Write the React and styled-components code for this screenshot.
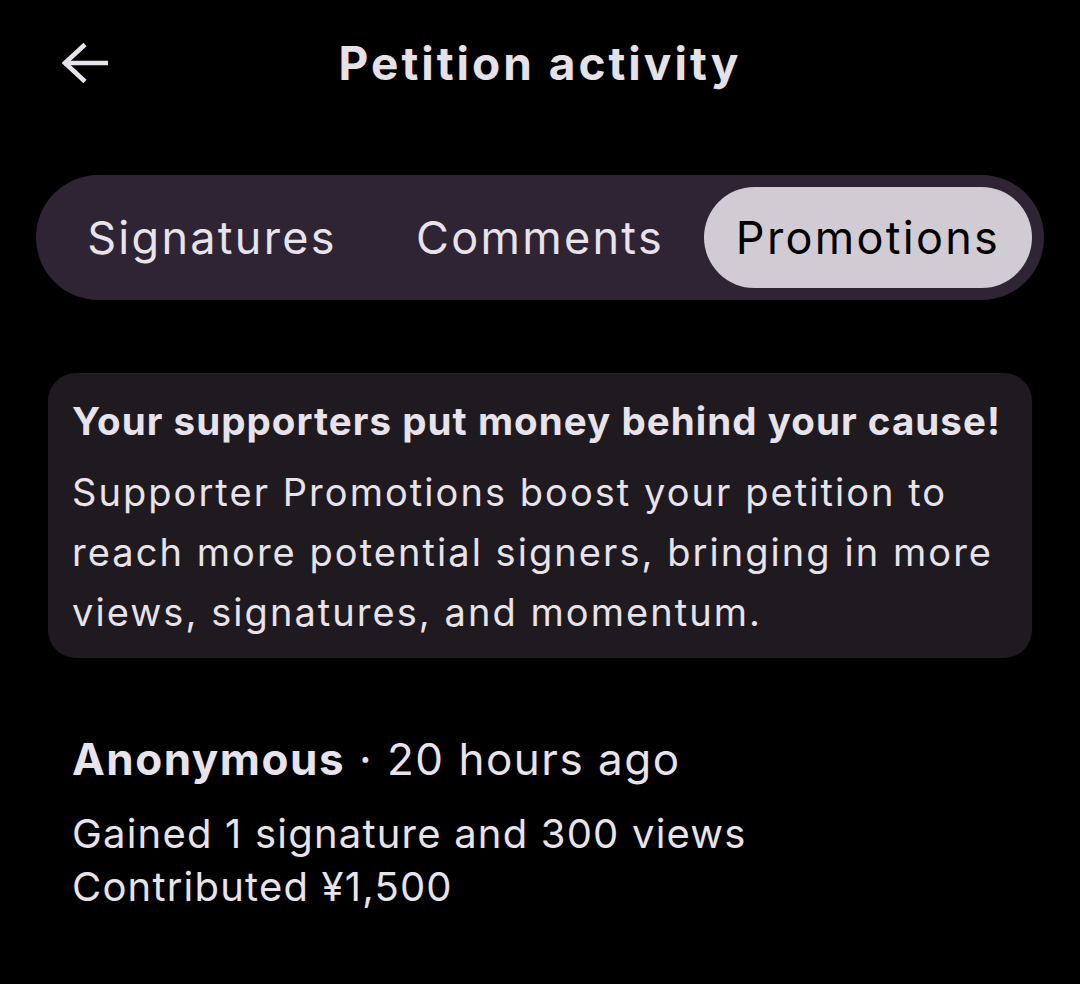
import React, { useState } from 'react';
import styled, { createGlobalStyle } from 'styled-components';

const GlobalStyle = createGlobalStyle`
  html, body {
    margin: 0;
    padding: 0;
    background: #000;
  }
  body {
    font-family: Inter, "Open Sans", "Liberation Sans", sans-serif;
    color: #e8e3ea;
    -webkit-font-smoothing: antialiased;
  }
`;

const Screen = styled.div`
  width: 1080px;
  min-height: 984px;
  background: #000;
  box-sizing: border-box;
  padding: 0 48px;
`;

const Header = styled.header`
  height: 126px;
  display: grid;
  grid-template-columns: 60px 1fr 60px;
  align-items: center;
  margin: 0 -48px;
  padding: 0 48px;
`;

const BackButton = styled.button`
  background: none;
  border: none;
  padding: 0;
  margin-left: 12px;
  width: 48px;
  height: 44px;
  display: flex;
  align-items: center;
  color: #e8e3ea;
  cursor: pointer;
`;

const Title = styled.h1`
  margin: 0;
  text-align: center;
  font-size: 46px;
  font-weight: 700;
  letter-spacing: 3px;
  color: #e6e1e6;
`;

const TabBar = styled.div`
  margin: 49px -12px 0;
  padding: 12px;
  height: 125px;
  box-sizing: border-box;
  border-radius: 63px;
  background: #2e2433;
  display: flex;
`;

const Tab = styled.button`
  flex: 1;
  border: none;
  border-radius: 51px;
  background: ${p => (p.$active ? '#d1ccd3' : 'transparent')};
  color: ${p => (p.$active ? '#000' : '#e8e3ea')};
  font-family: inherit;
  font-size: 45px;
  font-weight: 400;
  letter-spacing: 2.3px;
  padding: 0;
  cursor: pointer;
`;

const InfoCard = styled.section`
  margin-top: 73px;
  background: #1e1a20;
  border-radius: 28px;
  padding: 23px 24px 16px;
`;

const InfoHeading = styled.h2`
  margin: 0;
  font-size: 38.5px;
  line-height: 50px;
  font-weight: 700;
  letter-spacing: 1.05px;
  color: #e8e3ea;
`;

const InfoText = styled.p`
  margin: 16px 0 0;
  font-size: 38px;
  line-height: 60px;
  letter-spacing: 2.05px;
  color: #e8e3ea;
`;

const Entry = styled.article`
  margin-top: 71px;
  padding: 0 24px;
`;

const EntryHead = styled.div`
  font-size: 44px;
  line-height: 60px;
  letter-spacing: 1.5px;
  color: #e8e3ea;
`;

const Name = styled.span`
  font-weight: 700;
`;

const EntryLines = styled.div`
  margin-top: 18px;
  font-size: 40px;
  line-height: 53px;
  letter-spacing: 1.2px;
  color: #e8e3ea;
`;

const ArrowBack = () => (
  <svg width="48" height="44" viewBox="0 0 48 44" fill="none">
    <path d="M48 22H4" stroke="currentColor" strokeWidth="4.6" />
    <path d="M25 3.5L5 22l20 18.5" stroke="currentColor" strokeWidth="4.6" strokeLinejoin="miter" />
  </svg>
);

const tabs = ['Signatures', 'Comments', 'Promotions'];

export default function App() {
  const [active, setActive] = useState('Promotions');
  return (
    <>
      <GlobalStyle />
      <Screen>
        <Header>
          <BackButton aria-label="Back">
            <ArrowBack />
          </BackButton>
          <Title>Petition activity</Title>
          <span />
        </Header>

        <TabBar>
          {tabs.map(t => (
            <Tab key={t} $active={t === active} onClick={() => setActive(t)}>
              {t}
            </Tab>
          ))}
        </TabBar>

        <InfoCard>
          <InfoHeading>Your supporters put money behind your cause!</InfoHeading>
          <InfoText>
            Supporter Promotions boost your petition to reach more potential signers, bringing in more
            views, signatures, and momentum.
          </InfoText>
        </InfoCard>

        <Entry>
          <EntryHead>
            <Name>Anonymous</Name> · 20 hours ago
          </EntryHead>
          <EntryLines>
            <div>Gained 1 signature and 300 views</div>
            <div>Contributed ¥1,500</div>
          </EntryLines>
        </Entry>
      </Screen>
    </>
  );
}
